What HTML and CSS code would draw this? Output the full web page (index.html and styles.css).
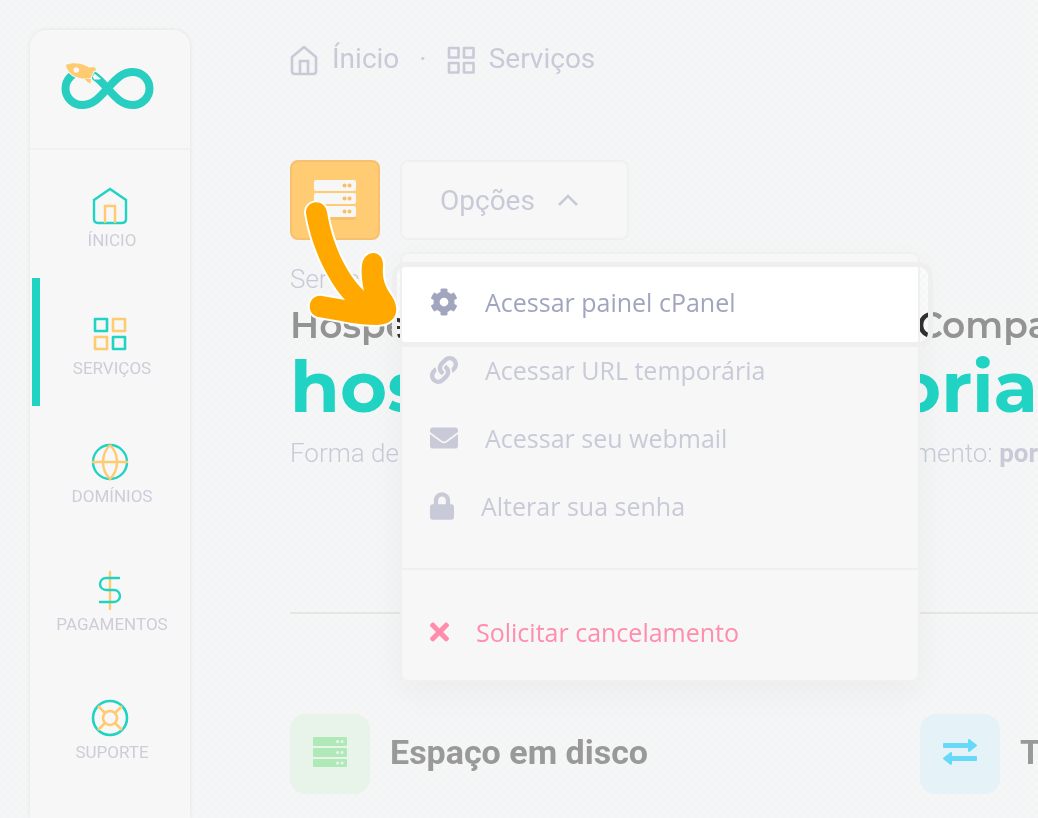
FILE: index.html
```html
<!DOCTYPE html>
<html lang="pt-BR">

<head>
    <meta charset="UTF-8">
    <meta name="viewport" content="width=device-width, initial-scale=1.0">
    <title>Serviços</title>
    <link rel="stylesheet" href="styles.css">
</head>

<body>
    <!-- Sidebar -->
    <aside class="sidebar">
        <a href="#" class="logo" aria-label="Painel">
            <svg width="94" height="50" viewBox="0 0 94 50">
                <path d="M46.500 26.500C38 17 32 10 21 10A16.500 16.500 0 0 0 21 43C32 43 38 36 46.500 26.500C55 17 61 10 72 10A16.500 16.500 0 0 1 72 43C61 43 55 36 46.500 26.500Z" fill="none" stroke="#28cec0" stroke-width="8" />
                <path d="M33 10.500L40.500 16.500L39 18H33L31 15Z" fill="#f7f7f7" stroke="#28cec0" stroke-width="1.200" />
                <path d="M4.700 3C14-1 26 2 32.500 9.500L29.500 16C20 18 8 15 4.700 3ZM28 5.500L33 5L35.500 7.500L33 9.500ZM23.500 17H30L29.700 21.500L27 20.500Z" fill="#ffcb70" stroke="#f7f7f7" stroke-width="2" paint-order="stroke" />
                <circle cx="15.300" cy="8" r="2.800" fill="#f7f7f7" />
            </svg>
        </a>
        <nav class="side-nav">
            <a href="#" class="side-link">
                <svg width="40" height="40" viewBox="0 0 40 40" fill="none" stroke-width="2.400">
                    <path d="M4 14L20 3L36 14V33Q36 37 32 37H8Q4 37 4 33Z" stroke="#20d3c3" />
                    <path d="M15 37V20H25V37" stroke="#ffcb70" />
                </svg>
                <span>Ínicio</span>
            </a>
            <a href="#" class="side-link active">
                <svg width="40" height="40" viewBox="0 0 40 40" fill="none" stroke-width="2.600" stroke-linejoin="round">
                    <path d="M5 5H17V17H5ZM23 23H35V35H23Z" stroke="#20d3c3" />
                    <path d="M23 5H35V17H23ZM5 23H17V35H5Z" stroke="#ffcb70" />
                </svg>
                <span>Serviços</span>
            </a>
            <a href="#" class="side-link">
                <svg width="40" height="40" viewBox="0 0 40 40" fill="none" stroke-width="2.400">
                    <circle cx="20" cy="20" r="17" stroke="#20d3c3" />
                    <path d="M2 20H38M20 3Q13 10 13 20T20 37Q27 30 27 20T20 3" stroke="#ffcb70" />
                </svg>
                <span>Domínios</span>
            </a>
            <a href="#" class="side-link">
                <svg width="40" height="40" viewBox="0 0 40 40" fill="none" stroke-width="2.400" stroke-linecap="round">
                    <path d="M20 2V39" stroke="#ffcb70" />
                    <path d="M29 8H16A6 6 0 0 0 16 20H24A6 6 0 0 1 24 32H10" stroke="#20d3c3" />
                </svg>
                <span>Pagamentos</span>
            </a>
            <a href="#" class="side-link">
                <svg width="40" height="40" viewBox="0 0 40 40" fill="none" stroke-width="2.600">
                    <circle cx="20" cy="20" r="17" stroke="#20d3c3" />
                    <path d="M8 8L15 15M32 8L25 15M8 32L15 25M32 32L25 25" stroke="#ffcb70" />
                    <circle cx="20" cy="20" r="7" stroke="#ffcb70" />
                </svg>
                <span>Suporte</span>
            </a>
        </nav>
    </aside>

    <main class="content">
        <nav class="breadcrumb">
            <a href="#">
                <svg width="28" height="32" viewBox="0 0 28 32" fill="none" stroke="currentColor" stroke-width="2.600">
                    <path d="M2 13L14 3L26 13V27Q26 30 23 30H5Q2 30 2 27Z" stroke-linejoin="round" />
                    <path d="M10 30V17H18V30" />
                </svg>
                <span>Ínicio</span>
            </a>
            <span class="dot">·</span>
            <a href="#">
                <svg width="28" height="28" viewBox="0 0 28 28" fill="none" stroke="currentColor" stroke-width="2.600" stroke-linejoin="round">
                    <path d="M2 2H11.500V11.500H2ZM17 2H26.500V11.500H17ZM2 17H11.500V26.500H2ZM17 17H26.500V26.500H17Z" />
                </svg>
                <span>Serviços</span>
            </a>
        </nav>

        <div class="toolbar">
            <div class="service-icon">
                <svg width="44" height="42" viewBox="0 0 44 42">
                    <rect x="1" y="31" width="42" height="10" rx="2" fill="#f9c06a" />
                    <path d="M3 1H41Q43 1 43 3V10Q43 12 41 12H3Q1 12 1 10V3Q1 1 3 1ZM3 14H41Q43 14 43 16V23Q43 25 41 25H3Q1 25 1 23V16Q1 14 3 14ZM3 27H41Q43 27 43 29V36Q43 38 41 38H3Q1 38 1 36V29Q1 27 3 27Z" fill="#f7f7f7" />
                    <path d="M31.500 6.500h.1M36.500 6.500h.1M31.500 19.500h.1M36.500 19.500h.1M31.500 32.500h.1M36.500 32.500h.1" stroke="#f9c06a" stroke-width="4" stroke-linecap="round" />
                </svg>
            </div>

            <div class="dropdown">
                <button type="button" class="options-btn" aria-expanded="true">
                    Opções
                    <svg width="20" height="12" viewBox="0 0 20 12" fill="none" stroke="currentColor" stroke-width="2.600">
                        <path d="M1 11L10 2L19 11" />
                    </svg>
                </button>

                <div class="spotlight-hole"></div>
                <div class="menu">
                    <div class="spotlight"></div>
                    <a href="#" class="menu-item current">
                        <svg width="28" height="28" viewBox="0 0 512 512" fill="currentColor">
                            <path d="M487.400 315.700l-42.600-24.600c4.300-23.200 4.300-47 0-70.200l42.600-24.600c4.900-2.800 7.100-8.600 5.500-14-11.100-35.600-30-67.800-54.700-94.600-3.800-4.100-10-5.100-14.800-2.300L380.800 110c-17.900-15.400-38.500-27.300-60.800-35.100V25.800c0-5.600-3.900-10.500-9.400-11.700-36.700-8.200-74.300-7.800-109.200 0-5.500 1.200-9.400 6.100-9.400 11.700V75c-22.200 7.900-42.800 19.800-60.800 35.100L88.700 85.500c-4.900-2.800-11-1.900-14.800 2.300-24.700 26.700-43.600 58.900-54.700 94.600-1.700 5.400.6 11.200 5.500 14L67.300 221c-4.300 23.200-4.300 47 0 70.200l-42.600 24.600c-4.900 2.800-7.100 8.600-5.500 14 11.100 35.600 30 67.800 54.700 94.600 3.800 4.100 10 5.100 14.800 2.300l42.600-24.600c17.900 15.400 38.500 27.300 60.800 35.100v49.200c0 5.600 3.900 10.500 9.400 11.700 36.700 8.200 74.300 7.800 109.200 0 5.500-1.200 9.400-6.100 9.400-11.700v-49.200c22.200-7.900 42.800-19.800 60.800-35.100l42.600 24.600c4.900 2.800 11 1.900 14.800-2.300 24.700-26.700 43.600-58.900 54.700-94.600 1.500-5.500-.7-11.300-5.600-14.100zM256 336c-44.100 0-80-35.900-80-80s35.900-80 80-80 80 35.900 80 80-35.900 80-80 80z" />
                        </svg>
                        Acessar painel cPanel
                    </a>
                    <a href="#" class="menu-item">
                        <svg width="28" height="28" viewBox="0 0 512 512" fill="currentColor">
                            <path d="M326.612 185.391c59.747 59.809 58.927 155.698.36 214.590-.11.120-.240.250-.360.370l-67.200 67.200c-59.270 59.270-155.699 59.262-214.960 0-59.270-59.260-59.270-155.700 0-214.960l37.106-37.106c9.840-9.840 26.786-3.300 27.294 10.606.648 17.722 3.826 35.527 9.690 52.721 1.986 5.822.567 12.262-3.783 16.612l-13.087 13.087c-28.026 28.026-28.905 73.660-1.155 101.960 28.024 28.579 74.086 28.749 102.325.510l67.200-67.190c28.191-28.191 28.073-73.757 0-101.830-3.701-3.694-7.429-6.564-10.341-8.569a16.037 16.037 0 0 1-6.947-12.606c-.396-10.567 3.348-21.456 11.698-29.806l21.054-21.055c5.521-5.521 14.182-6.199 20.584-1.731a152.482 152.482 0 0 1 20.522 17.197zM467.547 44.449c-59.261-59.262-155.690-59.270-214.960 0l-67.200 67.200c-.120.120-.250.250-.360.370-58.566 58.892-59.387 154.781.360 214.590a152.454 152.454 0 0 0 20.521 17.196c6.402 4.468 15.064 3.789 20.584-1.731l21.054-21.055c8.350-8.350 12.094-19.239 11.698-29.806a16.037 16.037 0 0 0-6.947-12.606c-2.912-2.005-6.640-4.875-10.341-8.569-28.073-28.073-28.191-73.639 0-101.830l67.200-67.190c28.239-28.239 74.300-28.069 102.325.510 27.750 28.300 26.872 73.934-1.155 101.960l-13.087 13.087c-4.350 4.350-5.769 10.790-3.783 16.612 5.864 17.194 9.042 34.999 9.690 52.721.509 13.906 17.454 20.446 27.294 10.606l37.106-37.106c59.271-59.259 59.271-155.699.001-214.959z" />
                        </svg>
                        Acessar URL temporária
                    </a>
                    <a href="#" class="menu-item">
                        <svg width="28" height="28" viewBox="0 0 512 512" fill="currentColor">
                            <path d="M502.300 190.800c3.900-3.100 9.700-.2 9.700 4.700V400c0 26.500-21.500 48-48 48H48c-26.500 0-48-21.500-48-48V195.600c0-5 5.700-7.800 9.700-4.700 22.400 17.400 52.100 39.500 154.100 113.600 21.100 15.400 56.700 47.800 92.200 47.600 35.700.3 72-32.800 92.300-47.600 102-74.100 131.600-96.300 154-113.700zM256 320c23.200.4 56.600-29.200 73.400-41.400 132.700-96.300 142.800-104.700 173.400-128.700 5.800-4.500 9.200-11.500 9.200-18.900v-19c0-26.500-21.500-48-48-48H48c-26.500 0-48 21.500-48 48v19c0 7.400 3.400 14.300 9.200 18.900 30.600 23.900 40.700 32.400 173.400 128.700 16.800 12.200 50.200 41.800 73.400 41.400z" />
                        </svg>
                        Acessar seu webmail
                    </a>
                    <a href="#" class="menu-item">
                        <svg width="24" height="28" viewBox="0 0 448 512" fill="currentColor">
                            <path d="M400 224h-24v-72C376 68.200 307.800 0 224 0S72 68.200 72 152v72H48c-26.500 0-48 21.500-48 48v192c0 26.500 21.500 48 48 48h352c26.500 0 48-21.500 48-48V272c0-26.500-21.500-48-48-48zm-104 0H152v-72c0-39.700 32.300-72 72-72s72 32.300 72 72v72z" />
                        </svg>
                        Alterar sua senha
                    </a>
                    <a href="#" class="menu-item cancel">
                        <svg width="19" height="28" viewBox="0 0 352 512" fill="currentColor">
                            <path d="M242.720 256l100.070-100.070c12.280-12.280 12.280-32.190 0-44.480l-22.240-22.240c-12.280-12.280-32.190-12.280-44.480 0L176 189.280 75.930 89.210c-12.280-12.280-32.190-12.280-44.480 0L9.210 111.450c-12.280 12.280-12.280 32.190 0 44.480L109.280 256 9.210 356.070c-12.280 12.280-12.280 32.190 0 44.480l22.240 22.240c12.280 12.280 32.200 12.280 44.480 0L176 322.720l100.070 100.070c12.280 12.280 32.200 12.280 44.480 0l22.240-22.240c12.280-12.280 12.280-32.190 0-44.480L242.720 256z" />
                        </svg>
                        Solicitar cancelamento
                    </a>
                </div>

                <svg class="arrow" width="100" height="136" viewBox="300 196 100 136">
                    <path d="M306 213C306 199 325 199 327 212C332 243 345 272 364 291C362 281 361 273 362 265C364 249 384 249 383 266C382 279 385 286 391 295C402 311 395 325 377 325C356 325 338 320 318 317C305 314 308 294 322 296L345 300C325 277 311 244 306 213Z" fill="#ffa900" stroke="#fff" stroke-width="4" paint-order="stroke" />
                </svg>
            </div>
        </div>

        <section class="service">
            <p class="service-label">Serviço</p>
            <h2 class="service-plan"><span>Hospe</span> <span>Compa</span></h2>
            <h1 class="service-domain"><span>hos</span> <span>oria</span></h1>
            <p class="service-payment"><span>Forma de</span> <span>pagamento: <b>por</b></span></p>
        </section>

        <section class="features">
            <div class="feature">
                <div class="feature-icon green">
                    <svg width="36" height="32" viewBox="0 0 36 32">
                        <path d="M2 1H34Q35 1 35 2V9Q35 10 34 10H2Q1 10 1 9V2Q1 1 2 1ZM2 12H34Q35 12 35 13V20Q35 21 34 21H2Q1 21 1 20V13Q1 12 2 12ZM2 23H34Q35 23 35 24V30Q35 31 34 31H2Q1 31 1 30V24Q1 23 2 23Z" fill="#afe9b8" />
                        <path d="M25.500 5.500h.1M30 5.500h.1M25.500 16.500h.1M30 16.500h.1M25.500 27h.1M30 27h.1" stroke="#e7f3e9" stroke-width="3" stroke-linecap="round" />
                    </svg>
                </div>
                <h3>Espaço em disco</h3>
            </div>
            <div class="feature">
                <div class="feature-icon blue">
                    <svg width="36" height="28" viewBox="0 0 36 28" fill="#67dafa" stroke="#67dafa" stroke-width="2" stroke-linejoin="round">
                        <path d="M2 6H27V2L34 7.500L27 13V9H2ZM34 19H9V15L2 20.500L9 26V22H34Z" />
                    </svg>
                </div>
                <h3>T</h3>
            </div>
        </section>
    </main>
</body>

</html>
```

FILE: styles.css
```css
* {
    box-sizing: border-box;
}

body {
    font-family: 'Roboto', sans-serif;
    background-color: #f6f6f6;
    background-image: radial-gradient(#f2f4f5 1px, transparent 3px), radial-gradient(#f2f4f5 1px, transparent 3px);
    background-size: 8px 8px;
    background-position: 0 0, 4px 4px;
    color: #c9cad8;
    display: flex;
    min-height: 100vh;
    margin: 0;
    overflow-x: hidden;
}

a {
    color: inherit;
    text-decoration: none;
}

svg {
    flex-shrink: 0;
}

h1,
h2,
h3,
p {
    margin: 0;
}

/* Sidebar */
.sidebar {
    width: 160px;
    flex-shrink: 0;
    margin: 30px 0 0 30px;
    background-color: #f7f7f7;
    border-radius: 16px 16px 0 0;
    box-shadow: 0 0 4px rgba(0, 0, 0, 0.08);
}

.logo {
    display: flex;
    justify-content: center;
    align-items: center;
    height: 120px;
    padding: 0 4px 4px 0;
    border-bottom: 2px solid #f1f1f1;
}

.side-link {
    display: flex;
    flex-direction: column;
    align-items: center;
    height: 128px;
    padding-top: 36px;
    border-left: 8px solid transparent;
    margin: 0 6px 0 2px;
    color: #cdcdda;
    font-size: 17px;
    line-height: 28px;
    text-transform: uppercase;
}

.side-link svg {
    margin-right: 4px;
}

.side-link.active {
    border-left-color: #20d3c3;
}

/* Main content */
.content {
    flex: 1;
    min-width: 0;
    padding: 40px 0 24px 100px;
}

.breadcrumb {
    display: flex;
    align-items: center;
    gap: 20px;
    height: 40px;
    margin-bottom: 80px;
    font-size: 28px;
}

.breadcrumb a {
    display: flex;
    align-items: center;
    gap: 14px;
}

.breadcrumb span {
    padding-bottom: 4px;
}

.toolbar {
    display: flex;
    gap: 20px;
    height: 80px;
    margin-bottom: 18px;
}

.service-icon {
    display: flex;
    justify-content: center;
    align-items: center;
    width: 90px;
    background-color: #ffcb73;
    border: 2px solid #f9c06f;
    border-radius: 8px;
}

.dropdown {
    position: relative;
}

.options-btn {
    display: flex;
    align-items: center;
    gap: 23px;
    height: 80px;
    padding: 0 49px 0 38px;
    background-color: #f7f7f7;
    border: 2px solid #f0f0f0;
    border-radius: 8px;
    color: #c9cad8;
    font-family: inherit;
    font-size: 28px;
    cursor: pointer;
}

/* Dropdown menu */
.menu {
    position: absolute;
    top: 92px;
    left: 0;
    z-index: 2;
    width: 520px;
    padding: 14px 0;
    background-color: #f7f7f7;
    border: 2px solid #f0f0f0;
    border-radius: 8px;
    box-shadow: 0 12px 36px rgba(0, 0, 0, 0.04);
}

.menu-item {
    position: relative;
    display: flex;
    align-items: center;
    gap: 27px;
    height: 68px;
    padding: 0 28px;
    font-family: 'Segoe UI', 'Open Sans', sans-serif;
    font-size: 25px;
}

.menu-item.current {
    z-index: 1;
    color: #a1a5bd;
}

.menu-item.current::before {
    content: "";
    position: absolute;
    inset: -1px 0 -6px;
    z-index: -1;
    background-color: #fff;
    border-radius: 4px 0 0 4px;
}

.menu-item.cancel {
    height: 112px;
    margin: 28px 0 -14px;
    padding-top: 28px;
    padding-bottom: 14px;
    border-top: 2px solid #f0f0f0;
    color: #ff8dab;
}

/* Highlight around the current item */
.spotlight {
    position: absolute;
    top: 8px;
    left: -10px;
    right: -15px;
    height: 85px;
    border: 5px solid #efefef;
    border-radius: 14px;
}

.spotlight-hole {
    position: absolute;
    top: 107px;
    left: -3px;
    z-index: 1;
    width: 531px;
    height: 75px;
    border-radius: 8px;
    backdrop-filter: brightness(0.69) contrast(3);
}

.arrow {
    position: absolute;
    top: 36px;
    left: -100px;
    z-index: 3;
}

/* Service details */
.service-label,
.service-payment {
    font-size: 26px;
    font-weight: 300;
    line-height: 42px;
}

.service-domain,
.service-payment {
    display: flex;
    justify-content: space-between;
}

.service-plan {
    display: grid;
    grid-template-columns: 627px 1fr;
    color: #939393;
    font-family: 'Montserrat', 'Inter', sans-serif;
    font-size: 36px;
    font-weight: 600;
    line-height: 50px;
}

.service-domain {
    color: #20d3c3;
    font-family: 'Montserrat', 'Inter', sans-serif;
    font-size: 72px;
    font-weight: 700;
    line-height: 72px;
}

.service-payment {
    line-height: 62px;
}

.service-payment b {
    font-weight: 700;
}

.features {
    display: grid;
    grid-template-columns: 630px 1fr;
    margin-top: 128px;
    padding-top: 100px;
    border-top: 2px solid #e6e6e6;
}

.feature {
    display: flex;
    align-items: center;
    gap: 20px;
}

.feature-icon {
    display: flex;
    justify-content: center;
    align-items: center;
    flex-shrink: 0;
    width: 80px;
    height: 80px;
    padding-bottom: 4px;
    border-radius: 16px;
}

.feature-icon.green {
    background-color: #e8f3ea;
}

.feature-icon.blue {
    background-color: #e5f2f8;
}

.feature h3 {
    padding-bottom: 4px;
    color: #999;
    font-size: 34px;
    font-weight: 700;
}
```
